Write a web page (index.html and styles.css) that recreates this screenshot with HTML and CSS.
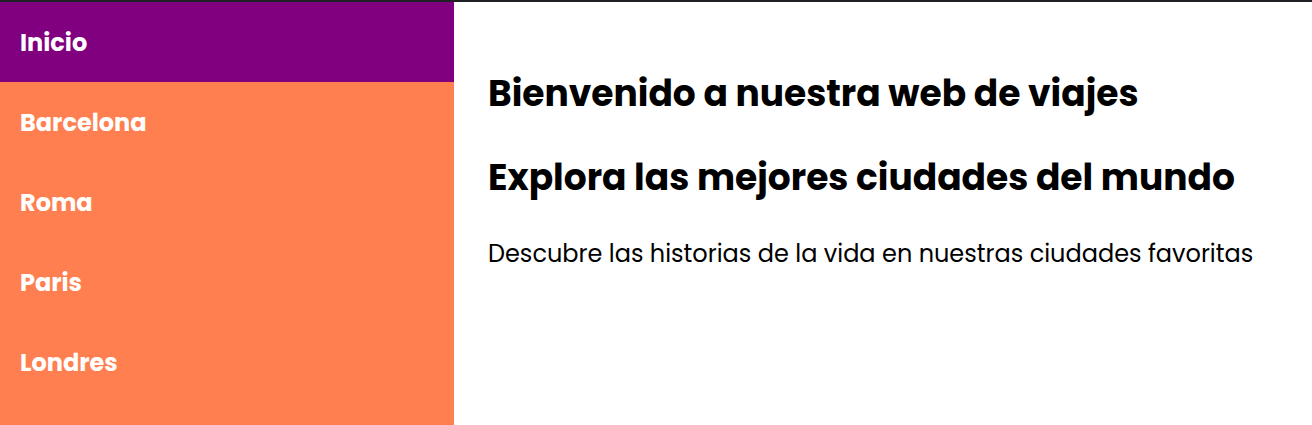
FILE: index.html
```html
<!DOCTYPE html>
<html lang="es">
<head>
<meta charset="utf-8">
<title>Viajes</title>
<link rel="stylesheet" href="styles.css">
</head>
<body>
<div class="topbar"></div>
<div class="layout">
  <nav class="sidebar">
    <a class="nav-item active" href="#">Inicio</a>
    <a class="nav-item" href="#">Barcelona</a>
    <a class="nav-item" href="#">Roma</a>
    <a class="nav-item" href="#">Paris</a>
    <a class="nav-item" href="#">Londres</a>
  </nav>
  <main class="content">
    <h1 class="title">Bienvenido a nuestra web de viajes</h1>
    <h2 class="title">Explora las mejores ciudades del mundo</h2>
    <p class="lead">Descubre las historias de la vida en nuestras ciudades favoritas</p>
  </main>
</div>
</body>
</html>
```
FILE: styles.css
```css
html, body {
  margin: 0;
  padding: 0;
  height: 100%;
}
body {
  font-family: Poppins, Inter, "Liberation Sans", sans-serif;
  background: #fff;
  color: #000;
  display: flex;
  flex-direction: column;
}
.topbar {
  height: 2px;
  background: #202124;
  flex: none;
}
.layout {
  flex: 1;
  display: flex;
}
.sidebar {
  width: 454px;
  flex: none;
  background: #ff7f50;
  display: flex;
  flex-direction: column;
}
.nav-item {
  height: 80px;
  display: flex;
  align-items: center;
  padding-left: 20px;
  color: #fff;
  text-decoration: none;
  font-weight: 700;
  font-size: 24px;
}
.nav-item.active {
  background: #800080;
}
.content {
  padding: 67px 34px 0;
}
.title {
  font-size: 36px;
  font-weight: 700;
  line-height: 50px;
  margin: 0 0 34px;
}
.lead {
  font-size: 24px;
  line-height: 34px;
  margin: 0;
}
```
